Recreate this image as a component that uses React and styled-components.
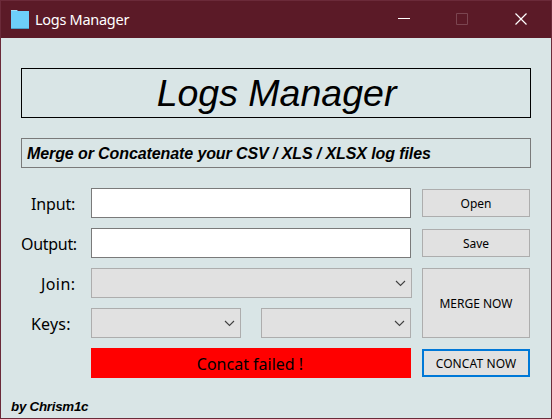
import React from "react";
import styled, { createGlobalStyle } from "styled-components";

const GlobalStyle = createGlobalStyle`
  *, *::before, *::after { box-sizing: border-box; }
  body { margin: 0; overflow: hidden; }
  button, input { margin: 0; padding: 0; border-radius: 0; outline: 0; appearance: none; }
`;

const Window = styled.div`
  width: 552px;
  height: 419px;
  display: flex;
  flex-direction: column;
  border: 1px solid #6b2a39;
  background: #d9e5e6;
  color: #000;
  font-family: "Noto Sans", sans-serif;
`;

const TitleBar = styled.header`
  height: 37px;
  flex: none;
  display: flex;
  align-items: center;
  padding-left: 10px;
  background: #5b1a27;
  color: #fff;
`;

const WindowTitle = styled.span`
  flex: 1;
  margin-left: 6px;
  padding-bottom: 2px;
  font-size: 14.5px;
  line-height: 20px;
  letter-spacing: -0.28px;
  white-space: nowrap;
`;

const Controls = styled.div`
  display: flex;
`;

const Control = styled.button`
  width: ${(p) => p.$width || 58}px;
  height: 37px;
  display: grid;
  place-items: center;
  padding-bottom: 1px;
  border: 0;
  background: none;
  color: ${(p) => (p.$muted ? "#7b4550" : "#fff")};
`;

const Content = styled.main`
  flex: 1;
  display: flex;
  flex-direction: column;
  padding: 30px 20px 0;
`;

const Heading = styled.h1`
  height: 50px;
  margin: 0 0 20px;
  padding-left: 1px;
  border: 1px solid #000;
  font: italic 400 37.5px/48px "Liberation Sans", sans-serif;
  text-align: center;
`;

const Description = styled.p`
  height: 30px;
  margin: 0 0 20px;
  padding-left: 5px;
  border: 1px solid #7a7a7a;
  font: italic 700 16px/30px "Liberation Sans", sans-serif;
  letter-spacing: -0.1px;
  white-space: nowrap;
`;

const Form = styled.div`
  display: grid;
  grid-template-columns: 70px 320px 108px;
  grid-template-rows: repeat(5, 30px);
  row-gap: 10px;
`;

const Label = styled.label`
  padding-left: ${(p) => p.$indent}px;
  font-size: 16px;
  line-height: 32px;
  letter-spacing: ${(p) => p.$spacing || 0}px;
  white-space: nowrap;
`;

const TextField = styled.input`
  width: 320px;
  height: 30px;
  border: 1px solid #7a7a7a;
  background: #fff;
`;

const Button = styled.button`
  grid-column: 3;
  grid-row: ${(p) => p.$rows};
  align-self: ${(p) => (p.$tall ? "stretch" : "center")};
  width: 108px;
  height: ${(p) => (p.$tall ? "70px" : "28px")};
  margin-left: 11px;
  padding-top: 2px;
  border: ${(p) => (p.$focused ? "2px solid #0078d7" : "1px solid #adadad")};
  background: #e1e1e1;
  color: #000;
  font: 400 12px/18px "Noto Sans", sans-serif;
  letter-spacing: ${(p) => p.$spacing || 0}px;
  white-space: nowrap;
`;

const Select = styled.div`
  width: ${(p) => p.$width}px;
  height: 30px;
  display: flex;
  align-items: center;
  justify-content: flex-end;
  padding-right: 5px;
  border: 1px solid #adadad;
  background: #e1e1e1;
`;

const KeyPair = styled.div`
  display: flex;
  justify-content: space-between;
`;

const Status = styled.output`
  grid-column: 2;
  background: #f00;
  padding-right: 2px;
  font-size: 16px;
  line-height: 32px;
  text-align: center;
`;

const Author = styled.footer`
  margin: 20px 0 0 -10px;
  font: italic 700 13.33px/18px "Liberation Sans", sans-serif;
  letter-spacing: -0.25px;
`;

const FolderIcon = () => (
  <svg width="18" height="20" viewBox="0 0 18 20">
    <path d="M0 0H6L7 1H18V19H0Z" fill="#6dcff9" />
    <path d="M0 0H6V1H0Z" fill="#a5dff5" />
    <path d="M0 18.5H18" stroke="#4a9fc8" />
  </svg>
);

const Chevron = () => (
  <svg width="11" height="7" viewBox="0 0 11 7" fill="none" stroke="#404040" strokeWidth="1.1">
    <path d="M1 1L5.5 5.5L10 1" />
  </svg>
);

const Combo = ({ width }) => (
  <Select $width={width} role="combobox">
    <Chevron />
  </Select>
);

export default function App() {
  return (
    <>
      <GlobalStyle />
      <Window>
        <TitleBar>
          <FolderIcon />
          <WindowTitle>Logs Manager</WindowTitle>
          <Controls>
            <Control aria-label="Minimize">
              <svg width="12" height="12" shapeRendering="crispEdges">
                <path d="M0 5.5H12" stroke="currentColor" />
              </svg>
            </Control>
            <Control aria-label="Maximize" $muted>
              <svg width="12" height="12" fill="none">
                <path d="M.5 .5H11.5V11.5H.5Z" stroke="currentColor" />
              </svg>
            </Control>
            <Control aria-label="Close" $width={60}>
              <svg width="12" height="12" fill="none">
                <path d="M.5 .5L11.5 11.5M11.5 .5L.5 11.5" stroke="currentColor" strokeWidth="1.2" />
              </svg>
            </Control>
          </Controls>
        </TitleBar>
        <Content>
          <Heading>Logs Manager</Heading>
          <Description>Merge or Concatenate your CSV / XLS / XLSX log files</Description>
          <Form>
            <Label $indent={10} $spacing={-0.15}>Input:</Label>
            <TextField aria-label="Input" />
            <Button $rows="1">Open</Button>

            <Label $indent={0} $spacing={-0.3}>Output:</Label>
            <TextField aria-label="Output" />
            <Button $rows="2">Save</Button>

            <Label $indent={20} $spacing={0.4}>Join:</Label>
            <Combo width={321} />
            <Button $rows="3 / 5" $tall>MERGE NOW</Button>

            <Label $indent={10} $spacing={0.2}>Keys:</Label>
            <KeyPair>
              <Combo width={150} />
              <Combo width={150} />
            </KeyPair>

            <Status>Concat failed !</Status>
            <Button $rows="5" $focused $spacing={0.1}>CONCAT NOW</Button>
          </Form>
          <Author>by Chrism1c</Author>
        </Content>
      </Window>
    </>
  );
}
